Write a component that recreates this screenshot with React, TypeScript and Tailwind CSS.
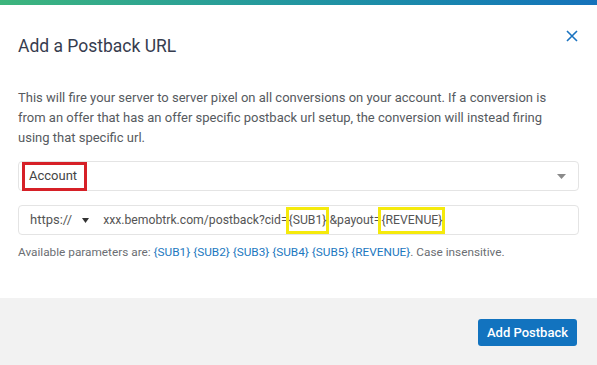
import React from 'react';

const Caret: React.FC<{ className?: string; w?: number }> = ({ className, w = 9 }) => (
  <svg width={w} height="5" viewBox="0 0 9 5" preserveAspectRatio="none" className={className}>
    <path d="M0 0 L9 0 L4.5 5 Z" fill="currentColor" />
  </svg>
);

export default function App() {
  return (
    <div className="w-[597px] h-[365px] bg-white flex flex-col font-['Roboto',sans-serif] overflow-hidden">
      <div className="h-[5px] bg-gradient-to-r from-[#3db57c] to-[#1672bb]" />

      <div className="relative px-[18px]">
        <h1 className="pt-[29px] text-[17.5px] leading-[24px] text-[#363c4e]">
          Add a Postback URL
        </h1>
        <button className="absolute right-[19px] top-[25px] text-[#1a73c0]">
          <svg width="12" height="12" viewBox="0 0 12 12">
            <path d="M1 1 L11 11 M11 1 L1 11" stroke="currentColor" strokeWidth="1.6" />
          </svg>
        </button>

        <p className="mt-[30px] text-[13px] leading-[20px] text-[#565a60]">
          This will fire your server to server pixel on all conversions on your account. If a conversion is
          <br />
          from an offer that has an offer specific postback url setup, the conversion will instead firing
          <br />
          using that specific url.
        </p>

        <div className="mt-[13px] h-[30px] border border-[#e4e4e4] rounded-[4px] flex items-center justify-between pl-[3px] pr-[12px]">
          <span className="inline-flex items-center h-[29px] border-[3px] border-[#d62027] pl-[4px] pr-[7px] text-[13px] text-[#444]">
            Account
          </span>
          <Caret className="text-[#8a8a8a]" />
        </div>

        <div className="mt-[14px] h-[30px] border border-[#e4e4e4] rounded-[4px] flex items-center text-[#555]">
          <span className="pl-[11px] text-[13px]">https://</span>
          <Caret w={7} className="ml-[10px] text-[#333]" />
          <span className="ml-[14px] flex items-center text-[12.2px]">
            xxx.bemobtrk.com/postback?cid=
            <span className="border-[3px] border-[#f5ea0c] h-[27px] inline-flex items-center -ml-[2px]">{'{SUB1}'}</span>
            &amp;payout=
            <span className="border-[3px] border-[#f5ea0c] h-[27px] inline-flex items-center -ml-[2px]">{'{REVENUE}'}</span>
          </span>
        </div>

        <p className="mt-[9px] text-[11.8px] leading-[16px] text-[#6b6e73]">
          Available parameters are:{' '}
          <span className="text-[#1c78c0]">{'{SUB1} {SUB2} {SUB3} {SUB4} {SUB5} {REVENUE}'}</span>. Case insensitive.
        </p>
      </div>

      <div className="mt-auto h-[67px] bg-[#f2f2f2] flex justify-end items-start pt-[21px] pr-[20px]">
        <button className="w-[99px] h-[27px] rounded-[3px] bg-[#1273bf] text-white text-[13px] font-medium">
          Add Postback
        </button>
      </div>
    </div>
  );
}
